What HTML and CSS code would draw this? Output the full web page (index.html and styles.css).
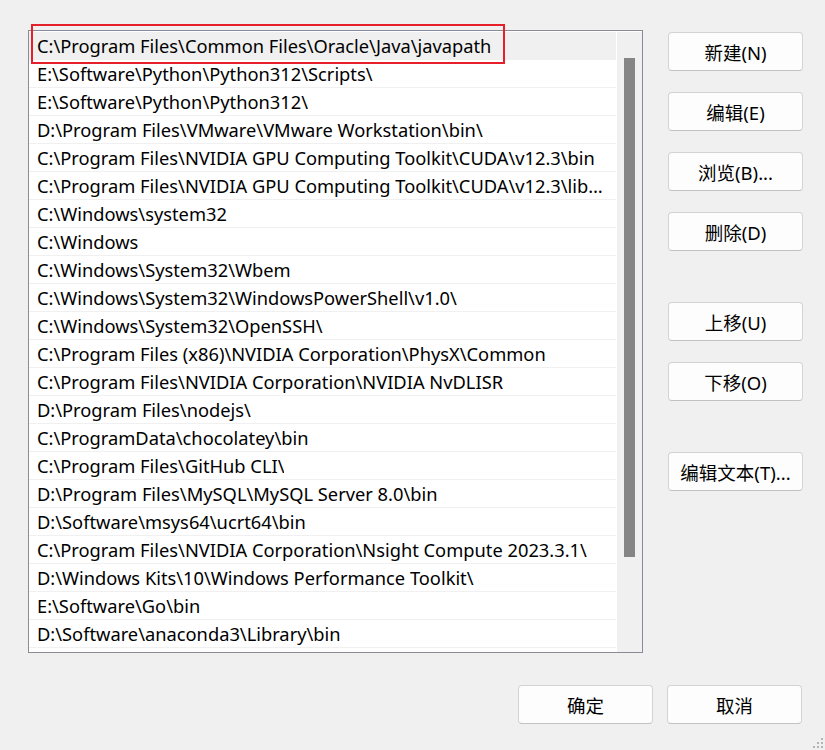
FILE: index.html
```html
<!DOCTYPE html>
<html lang="zh-CN">
<head>
    <meta charset="UTF-8">
    <meta name="viewport" content="width=device-width, initial-scale=1.0">
    <title>编辑环境变量</title>
    <link rel="stylesheet" href="styles.css">
</head>
<body>
    <div class="dialog">
        <div class="main">
            <div class="path-list">
                <ul class="rows">
                    <li class="row selected"><span class="path">C:\Program Files\Common Files\Oracle\Java\javapath</span><div class="mark"></div></li>
                    <li class="row"><span class="path">E:\Software\Python\Python312\Scripts\</span></li>
                    <li class="row"><span class="path">E:\Software\Python\Python312\</span></li>
                    <li class="row"><span class="path">D:\Program Files\VMware\VMware Workstation\bin\</span></li>
                    <li class="row"><span class="path">C:\Program Files\NVIDIA GPU Computing Toolkit\CUDA\v12.3\bin</span></li>
                    <li class="row"><span class="path">C:\Program Files\NVIDIA GPU Computing Toolkit\CUDA\v12.3\libnvvp</span></li>
                    <li class="row"><span class="path">C:\Windows\system32</span></li>
                    <li class="row"><span class="path">C:\Windows</span></li>
                    <li class="row"><span class="path">C:\Windows\System32\Wbem</span></li>
                    <li class="row"><span class="path">C:\Windows\System32\WindowsPowerShell\v1.0\</span></li>
                    <li class="row"><span class="path">C:\Windows\System32\OpenSSH\</span></li>
                    <li class="row"><span class="path">C:\Program Files (x86)\NVIDIA Corporation\PhysX\Common</span></li>
                    <li class="row"><span class="path">C:\Program Files\NVIDIA Corporation\NVIDIA NvDLISR</span></li>
                    <li class="row"><span class="path">D:\Program Files\nodejs\</span></li>
                    <li class="row"><span class="path">C:\ProgramData\chocolatey\bin</span></li>
                    <li class="row"><span class="path">C:\Program Files\GitHub CLI\</span></li>
                    <li class="row"><span class="path">D:\Program Files\MySQL\MySQL Server 8.0\bin</span></li>
                    <li class="row"><span class="path">D:\Software\msys64\ucrt64\bin</span></li>
                    <li class="row"><span class="path">C:\Program Files\NVIDIA Corporation\Nsight Compute 2023.3.1\</span></li>
                    <li class="row"><span class="path">D:\Windows Kits\10\Windows Performance Toolkit\</span></li>
                    <li class="row"><span class="path">E:\Software\Go\bin</span></li>
                    <li class="row"><span class="path">D:\Software\anaconda3\Library\bin</span></li>
                </ul>
                <div class="scrollbar">
                    <div class="thumb"></div>
                </div>
            </div>

            <div class="side-buttons">
                <div class="group">
                    <button class="btn">新建(N)</button>
                    <button class="btn">编辑(E)</button>
                    <button class="btn">浏览(B)...</button>
                    <button class="btn">删除(D)</button>
                </div>
                <div class="group">
                    <button class="btn">上移(U)</button>
                    <button class="btn">下移(O)</button>
                </div>
                <div class="group">
                    <button class="btn">编辑文本(T)...</button>
                </div>
            </div>
        </div>

        <div class="footer">
            <button class="btn">确定</button>
            <button class="btn">取消</button>
        </div>

        <!-- 창 크기 조절 손잡이 -->
        <svg class="grip" width="14" height="14" viewBox="0 0 14 14">
            <rect x="10" y="2" width="2" height="2" fill="#b4b4b4"/>
            <rect x="6" y="6" width="2" height="2" fill="#b4b4b4"/>
            <rect x="10" y="6" width="2" height="2" fill="#b4b4b4"/>
            <rect x="2" y="10" width="2" height="2" fill="#b4b4b4"/>
            <rect x="6" y="10" width="2" height="2" fill="#b4b4b4"/>
            <rect x="10" y="10" width="2" height="2" fill="#b4b4b4"/>
        </svg>
    </div>
</body>
</html>
```

FILE: styles.css
```css
* {
    padding: 0;
    margin: 0;
    box-sizing: border-box;
}

html, body {
    height: 100%;
}

body {
    background-color: #f0f0f0;
    font-family: "Noto Sans", "Noto Sans CJK SC", sans-serif;
    font-size: 18.3px;
    color: #000;
}

.dialog {
    position: relative;
    height: 750px;
    padding: 30px 23px 0 28px;
}

.main {
    display: flex;
    gap: 25px;
}

.path-list {
    width: 615px;
    height: 623px;
    border: 1px solid #8b8b95;
    background-color: #fff;
    padding-top: 1px;
    display: flex;
}

.rows {
    list-style: none;
    width: 587px;
}

.row {
    position: relative;
    height: 28px;
    border-bottom: 1px solid #f0f0f0;
    padding: 0 4px 0 8px;
    display: flex;
    align-items: center;
}

.row.selected {
    background-color: #f0f0f0;
}

.path {
    white-space: nowrap;
    overflow: hidden;
    text-overflow: ellipsis;
    line-height: 27px;
}

.mark {
    position: absolute;
    left: 2px;
    top: -8px;
    width: 474px;
    height: 40px;
    border: 2px solid #e5202b;
}

.scrollbar {
    width: 25px;
    margin-left: 1px;
    background-color: #f0f0f0;
    padding: 26px 0 0 7px;
}

.thumb {
    width: 11px;
    height: 499px;
    background-color: #858585;
}

.side-buttons {
    padding-top: 2px;
    display: flex;
    flex-direction: column;
    gap: 51px;
}

.group {
    display: flex;
    flex-direction: column;
    gap: 21px;
}

.btn {
    width: 135px;
    height: 39px;
    background-color: #fdfdfd;
    border: 1px solid #d3d3d3;
    border-bottom-color: #c2c2c2;
    border-radius: 4px;
    font-family: inherit;
    font-size: 18.5px;
    color: #000;
}

.footer {
    display: flex;
    justify-content: flex-end;
    gap: 14px;
    margin-top: 32px;
}

.grip {
    position: absolute;
    right: 0;
    bottom: 0;
}
```
